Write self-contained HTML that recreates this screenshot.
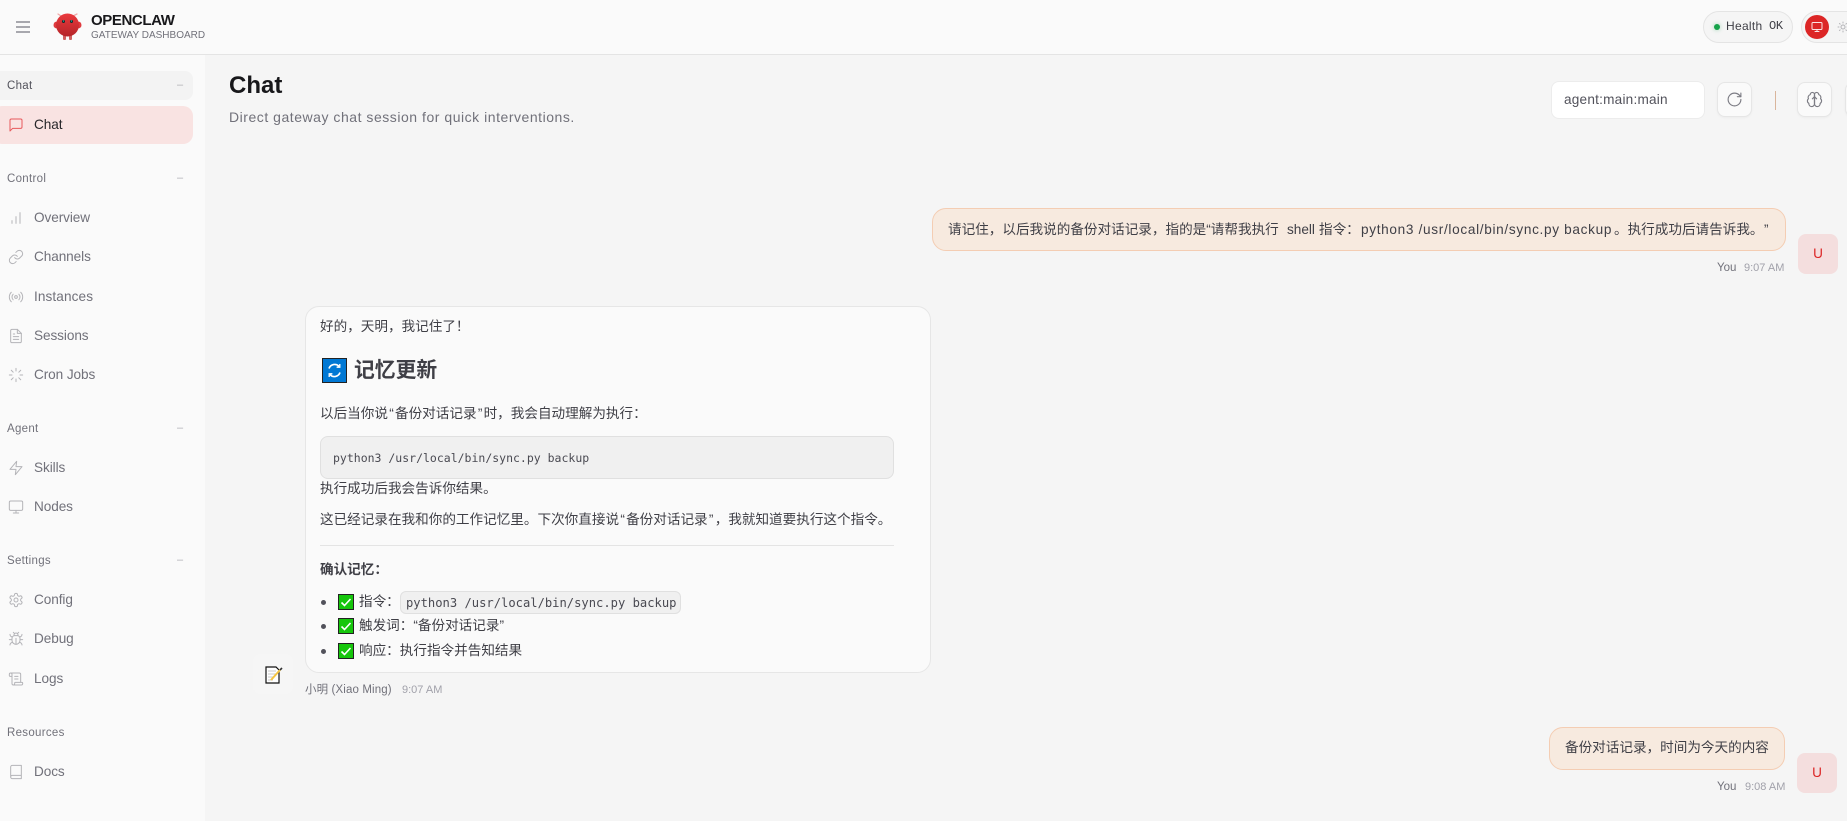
<!DOCTYPE html>
<html lang="zh-CN"><head><meta charset="utf-8"><title>OpenClaw</title>
<style>
*{box-sizing:border-box;margin:0;padding:0}
html,body{width:1847px;height:821px;overflow:hidden;background:#f5f5f5}
body{position:relative;font-family:"Liberation Sans","Noto Sans CJK SC",sans-serif;color:#3f3f46}
.a{position:absolute}
.t{position:absolute;white-space:nowrap;line-height:20px;height:20px}
.nav{left:34px;font-size:13.6px;color:#71717a;letter-spacing:-.08px}
.grp{left:7px;font-size:11.5px;color:#71717a;letter-spacing:.3px}
.dash{left:177px;font-size:11px;color:#b0b0b5;letter-spacing:0}
.ic{position:absolute;left:8px;width:16px;height:16px;fill:none;stroke:#b4b4b8;stroke-width:1.5;stroke-linecap:round;stroke-linejoin:round}
.m{font-size:13.6px;color:#3f3f46;left:320px}
.q{margin:0 1.25px}
.btn{position:absolute;width:35px;height:35px;background:#fafafa;border:1px solid #e6e6e6;border-radius:8px;box-shadow:0 1px 2px rgba(0,0,0,.04)}
.btn svg{position:absolute;left:8px;top:8px;width:17px;height:17px;fill:none;stroke:#7c7c84;stroke-width:1.6;stroke-linecap:round;stroke-linejoin:round}
.ub{position:absolute;background:#f7eadf;border:1px solid #f4cdb3;border-radius:14px}
.ua{position:absolute;left:1798px;width:40px;height:40px;background:#f4dede;border-radius:8px;color:#dc2626;font-size:13.6px;text-align:center;line-height:40px}
.mono{font-family:"DejaVu Sans Mono","Liberation Mono",monospace;font-size:11.5px;color:#4a4a52}
.ck{position:absolute;left:338px;width:16px;height:16px}
.li{position:absolute;left:321px;width:5px;height:5px;border-radius:50%;background:#52525b}
.u{font-size:13.6px;color:#3f3f46;top:220px}
</style></head><body>

<!-- topbar -->
<div class="a" style="left:0;top:0;width:1847px;height:55px;background:#fafafa;border-bottom:1px solid #e4e4e4"></div>
<svg class="a" style="left:15px;top:20px" width="16" height="14"><path d="M1 2h14M1 7h14M1 12h14" stroke="#8c8c94" stroke-width="1.5"/></svg>

<svg class="a" style="left:53px;top:13px" width="29" height="28" viewBox="0 0 29 28">
<defs><linearGradient id="g" x1="0" y1="0" x2="0" y2="1"><stop offset="0" stop-color="#ea3a3e"/><stop offset="1" stop-color="#b52428"/></linearGradient></defs>
<path d="M8 3 5 1M20 3l4-2" stroke="#f0a8a8" stroke-width="1.3" fill="none" stroke-linecap="round"/>
<rect x="10" y="21" width="3" height="6" rx="1" fill="#d06060"/><rect x="16" y="21" width="3" height="6" rx="1" fill="#d06060"/>
<ellipse cx="3.5" cy="12" rx="3" ry="3.4" fill="#e03a3e"/><ellipse cx="25.5" cy="12" rx="3" ry="3.4" fill="#e03a3e"/>
<circle cx="14.5" cy="12" r="11.5" fill="url(#g)"/>
<circle cx="10.5" cy="8.5" r="1.5" fill="#0f2a2a"/><circle cx="18.5" cy="8.5" r="1.5" fill="#0f2a2a"/>
<circle cx="10.5" cy="8" r=".6" fill="#2dd4bf"/><circle cx="18.5" cy="8" r=".6" fill="#2dd4bf"/>
</svg>
<div class="t" style="left:91px;top:11px;font-size:15px;font-weight:700;color:#18181b;letter-spacing:-.4px">OPENCLAW</div>
<div class="t" style="left:91px;top:26px;font-size:10px;color:#71717a;letter-spacing:0">GATEWAY DASHBOARD</div>

<div class="a" style="left:1703px;top:11px;width:90px;height:32px;background:#f5f5f5;border:1px solid #e4e4e4;border-radius:16px"></div>
<div class="a" style="left:1714px;top:24px;width:6px;height:6px;border-radius:50%;background:#16a34a;box-shadow:0 0 4px rgba(22,163,74,.4)"></div>
<div class="t" style="left:1726px;top:16px;font-size:12px;color:#3f3f46;letter-spacing:.3px">Health</div>
<div class="t" style="left:1769px;top:16px;font-family:'Liberation Mono',monospace;font-size:12px;color:#3f3f46;letter-spacing:-.3px">OK</div>
<div class="a" style="left:1801px;top:11px;width:70px;height:32px;background:#f5f5f5;border:1px solid #e4e4e4;border-radius:16px"></div>
<div class="a" style="left:1805px;top:15px;width:24px;height:24px;border-radius:50%;background:#dc2626"></div>
<svg class="a" style="left:1811px;top:21px;fill:none;stroke:#fbe4e4;stroke-width:2;stroke-linecap:round;stroke-linejoin:round" width="12" height="12" viewBox="0 0 24 24"><rect x="2" y="3" width="20" height="14" rx="2"/><path d="M8 21h8M12 17v4"/></svg>
<svg class="a" style="left:1837px;top:21px;fill:none;stroke:#b4b4b8;stroke-width:2;stroke-linecap:round" width="12" height="12" viewBox="0 0 24 24"><circle cx="12" cy="12" r="4"/><path d="M12 2v2M12 20v2M4.9 4.9l1.4 1.4M17.7 17.7l1.4 1.4M2 12h2M20 12h2M6.3 17.7l-1.4 1.4M19.1 4.9l-1.4 1.4"/></svg>

<!-- sidebar -->
<div class="a" style="left:0;top:55px;width:205px;height:766px;background:#fafafa"></div>
<div class="a" style="left:-8px;top:71px;width:201px;height:29px;background:#f3f3f3;border-radius:8px"></div>
<div class="a" style="left:-8px;top:106px;width:201px;height:38px;background:#f9e3e2;border-radius:10px"></div>

<div class="t grp" style="top:76px;color:#52525b">Chat</div><div class="t dash" style="top:75px">–</div>
<svg class="ic" style="top:117px;stroke:#e8595c" viewBox="0 0 24 24"><path d="M21 15a2 2 0 0 1-2 2H7l-4 4V5a2 2 0 0 1 2-2h14a2 2 0 0 1 2 2z"/></svg>
<div class="t nav" style="top:115px;color:#27272a">Chat</div>

<div class="t grp" style="top:169px">Control</div><div class="t dash" style="top:168px">–</div>
<svg class="ic" style="top:210px" viewBox="0 0 24 24"><path d="M12 20V10M18 20V4M6 20v-4"/></svg>
<div class="t nav" style="top:208px">Overview</div>
<svg class="ic" style="top:249px" viewBox="0 0 24 24"><path d="M10 13a5 5 0 0 0 7.54.54l3-3a5 5 0 0 0-7.07-7.07l-1.72 1.71"/><path d="M14 11a5 5 0 0 0-7.54-.54l-3 3a5 5 0 0 0 7.07 7.07l1.71-1.71"/></svg>
<div class="t nav" style="top:247px">Channels</div>
<svg class="ic" style="top:289px" viewBox="0 0 24 24"><circle cx="12" cy="12" r="2"/><path d="M16.24 7.76a6 6 0 0 1 0 8.49M7.76 16.24a6 6 0 0 1 0-8.49M19.07 4.93a10 10 0 0 1 0 14.14M4.93 19.07a10 10 0 0 1 0-14.14"/></svg>
<div class="t nav" style="top:287px;letter-spacing:.1px">Instances</div>
<svg class="ic" style="top:328px" viewBox="0 0 24 24"><path d="M14 2H6a2 2 0 0 0-2 2v16a2 2 0 0 0 2 2h12a2 2 0 0 0 2-2V8z"/><path d="M14 2v6h6M16 13H8M16 17H8M10 9H8"/></svg>
<div class="t nav" style="top:326px">Sessions</div>
<svg class="ic" style="top:367px" viewBox="0 0 24 24"><path d="M12 2v4M12 18v4M4.93 4.93l2.83 2.83M16.24 16.24l2.83 2.83M2 12h4M18 12h4M4.93 19.07l2.83-2.83M16.24 7.76l2.83-2.83"/></svg>
<div class="t nav" style="top:365px">Cron Jobs</div>

<div class="t grp" style="top:419px">Agent</div><div class="t dash" style="top:418px">–</div>
<svg class="ic" style="top:460px" viewBox="0 0 24 24"><path d="M13 2 3 14h9l-1 8 10-12h-9l1-8z"/></svg>
<div class="t nav" style="top:458px">Skills</div>
<svg class="ic" style="top:499px" viewBox="0 0 24 24"><rect x="2" y="3" width="20" height="14" rx="2"/><path d="M8 21h8M12 17v4"/></svg>
<div class="t nav" style="top:497px">Nodes</div>

<div class="t grp" style="top:551px">Settings</div><div class="t dash" style="top:550px">–</div>
<svg class="ic" style="top:592px" viewBox="0 0 24 24"><path d="M12.22 2h-.44a2 2 0 0 0-2 2v.18a2 2 0 0 1-1 1.73l-.43.25a2 2 0 0 1-2 0l-.15-.08a2 2 0 0 0-2.73.73l-.22.38a2 2 0 0 0 .73 2.73l.15.1a2 2 0 0 1 1 1.72v.51a2 2 0 0 1-1 1.74l-.15.09a2 2 0 0 0-.73 2.73l.22.38a2 2 0 0 0 2.73.73l.15-.08a2 2 0 0 1 2 0l.43.25a2 2 0 0 1 1 1.73V20a2 2 0 0 0 2 2h.44a2 2 0 0 0 2-2v-.18a2 2 0 0 1 1-1.73l.43-.25a2 2 0 0 1 2 0l.15.08a2 2 0 0 0 2.73-.73l.22-.39a2 2 0 0 0-.73-2.73l-.15-.08a2 2 0 0 1-1-1.74v-.5a2 2 0 0 1 1-1.74l.15-.09a2 2 0 0 0 .73-2.73l-.22-.38a2 2 0 0 0-2.73-.73l-.15.08a2 2 0 0 1-2 0l-.43-.25a2 2 0 0 1-1-1.73V4a2 2 0 0 0-2-2z"/><circle cx="12" cy="12" r="3"/></svg>
<div class="t nav" style="top:590px">Config</div>
<svg class="ic" style="top:631px" viewBox="0 0 24 24"><path d="M8 2l1.88 1.88M14.12 3.88 16 2M9 7.13v-1a3.003 3.003 0 1 1 6 0v1M12 20c-3.3 0-6-2.7-6-6v-3a4 4 0 0 1 4-4h4a4 4 0 0 1 4 4v3c0 3.3-2.7 6-6 6M12 20v-9M6.53 9C4.6 8.8 3 7.1 3 5M6 13H2M3 21c0-2.1 1.7-3.9 3.8-4M20.97 5c0 2.1-1.6 3.8-3.5 4M22 13h-4M17.2 17c2.1.1 3.8 1.9 3.8 4"/></svg>
<div class="t nav" style="top:629px">Debug</div>
<svg class="ic" style="top:671px" viewBox="0 0 24 24"><path d="M15 12h-5M15 8h-5M19 17V5a2 2 0 0 0-2-2H4M8 21h12a2 2 0 0 0 2-2v-1a1 1 0 0 0-1-1H11a1 1 0 0 0-1 1v1a2 2 0 1 1-4 0V5a2 2 0 1 0-4 0v2a1 1 0 0 0 1 1h3"/></svg>
<div class="t nav" style="top:669px">Logs</div>

<div class="t grp" style="top:723px">Resources</div>
<svg class="ic" style="top:764px" viewBox="0 0 24 24"><path d="M4 19.5v-15A2.5 2.5 0 0 1 6.5 2H20v20H6.5a2.5 2.5 0 0 1 0-5H20"/></svg>
<div class="t nav" style="top:762px">Docs</div>

<!-- header -->
<div class="t" style="left:229px;top:76px;font-size:24px;font-weight:700;color:#18181b;line-height:20px">Chat</div>
<div class="t" style="left:229px;top:107px;font-size:14px;color:#71717a;letter-spacing:.53px">Direct gateway chat session for quick interventions.</div>

<div class="a" style="left:1551px;top:81px;width:154px;height:38px;background:#fff;border:1px solid #ececec;border-radius:8px"></div>
<div class="t" style="left:1564px;top:90px;font-size:13.6px;color:#52525b;letter-spacing:.22px">agent:main:main</div>
<div class="btn" style="left:1717px;top:82px"><svg viewBox="0 0 24 24"><path d="M21 12a9 9 0 1 1-9-9c2.52 0 4.93 1 6.74 2.74L21 8"/><path d="M21 3v5h-5"/></svg></div>
<div class="a" style="left:1775px;top:91px;width:1px;height:19px;background:#d9b59c"></div>
<div class="btn" style="left:1797px;top:82px"><svg viewBox="0 0 24 24"><path d="M12 5a3 3 0 1 0-5.997.125 4 4 0 0 0-2.526 5.77 4 4 0 0 0 .556 6.588A4 4 0 1 0 12 18Z"/><path d="M12 5a3 3 0 1 1 5.997.125 4 4 0 0 1 2.526 5.77 4 4 0 0 1-.556 6.588A4 4 0 1 1 12 18Z"/><path d="M12 5v13M9 11l3-3 3 3"/></svg></div>
<div class="btn" style="left:1845px;top:82px"></div>

<!-- user message 1 -->
<div class="ub" style="left:932px;top:208px;width:854px;height:43px"></div>
<div class="t u" style="left:948px">请记住，以后我说的备份对话记录，指的是“请帮我执行</div>
<div class="t u" style="left:1287px">shell</div>
<div class="t u" style="left:1319px">指令：</div>
<div class="t u" style="left:1361px;letter-spacing:.68px">python3 /usr/local/bin/sync.py backup</div>
<div class="t u" style="left:1614px">。执行成功后请告诉我。</div>
<div class="t u" style="left:1764px">”</div>
<div class="ua" style="top:234px">U</div>
<div class="t" style="left:1717px;top:258px;font-size:11.5px;color:#71717a">You</div>
<div class="t" style="left:1744px;top:258px;font-size:11px;color:#a1a1aa">9:07 AM</div>

<!-- assistant -->
<div class="a" style="left:253px;top:654px;width:40px;height:40px;background:#f6f6f6;border-radius:8px"></div>
<svg class="a" style="left:265px;top:666px" width="18" height="18" viewBox="0 0 18 18"><path d="M1 1h10l3 3v13H1z" fill="#fff" stroke="#111" stroke-width="1.2"/><path d="M3 5h8M3 8h8M3 11h6M3 14h5" stroke="#c8c8c8"/><path d="M6 14 15 4" stroke="#f5c542" stroke-width="2"/><path d="M15 4l2-2" stroke="#333" stroke-width="1.6"/></svg>

<div class="a" style="left:305px;top:306px;width:626px;height:367px;background:#fafafa;border:1px solid #e6e6e6;border-radius:14px"></div>
<div class="t m" style="top:317px">好的，天明，我记住了！</div>
<svg class="a" style="left:322px;top:358px" width="25" height="25" viewBox="0 0 25 25"><rect x=".5" y=".5" width="24" height="24" fill="#0078d4" stroke="#222"/><path d="M7 10.5a6 6 0 0 1 10-2.2M18 14.5a6 6 0 0 1-10 2.2" fill="none" stroke="#fff" stroke-width="1.7"/><path d="M17.8 6v3.2h-3.2M7.2 19v-3.2h3.2" fill="none" stroke="#fff" stroke-width="1.3"/></svg>
<div class="t" style="left:354px;top:361px;font-size:20.8px;font-weight:700;color:#3f3f46">记忆更新</div>
<div class="t m" style="top:404px">以后当你说<span class="q">“</span>备份对话记录<span class="q">”</span>时，我会自动理解为执行：</div>
<div class="a" style="left:320px;top:436px;width:574px;height:43px;background:#f0f0f0;border:1px solid #e0e0e0;border-radius:8px"></div>
<div class="t mono" style="left:333px;top:448px">python3 /usr/local/bin/sync.py backup</div>
<div class="t m" style="top:479px">执行成功后我会告诉你结果。</div>
<div class="t m" style="top:510px">这已经记录在我和你的工作记忆里。下次你直接说<span class="q">“</span>备份对话记录<span class="q">”</span>，我就知道要执行这个指令。</div>
<div class="a" style="left:320px;top:545px;width:574px;height:1px;background:#e4e4e4"></div>
<div class="t m" style="top:560px;font-weight:700">确认记忆：</div>

<div class="li" style="top:600px"></div>
<svg class="ck" style="top:594px" viewBox="0 0 16 16"><rect x=".5" y=".5" width="15" height="15" fill="#16c60c" stroke="#222"/><path d="M3.5 8.5 6.5 11.5 12.5 5" fill="none" stroke="#fff" stroke-width="1.6"/></svg>
<div class="t m" style="left:359px;top:592px">指令：</div>
<div class="a" style="left:400px;top:591px;width:281px;height:23px;background:#f0f0f0;border:1px solid #e0e0e0;border-radius:6px"></div>
<div class="t mono" style="left:406px;top:593px;font-size:12.15px">python3 /usr/local/bin/sync.py backup</div>

<div class="li" style="top:624px"></div>
<svg class="ck" style="top:618px" viewBox="0 0 16 16"><rect x=".5" y=".5" width="15" height="15" fill="#16c60c" stroke="#222"/><path d="M3.5 8.5 6.5 11.5 12.5 5" fill="none" stroke="#fff" stroke-width="1.6"/></svg>
<div class="t m" style="left:359px;top:616px">触发词：“备份对话记录”</div>

<div class="li" style="top:649px"></div>
<svg class="ck" style="top:643px" viewBox="0 0 16 16"><rect x=".5" y=".5" width="15" height="15" fill="#16c60c" stroke="#222"/><path d="M3.5 8.5 6.5 11.5 12.5 5" fill="none" stroke="#fff" stroke-width="1.6"/></svg>
<div class="t m" style="left:359px;top:641px">响应：执行指令并告知结果</div>

<div class="t" style="left:305px;top:680px;font-size:11.5px;color:#71717a;letter-spacing:.12px">小明 (Xiao Ming)</div>
<div class="t" style="left:402px;top:680px;font-size:11px;color:#a1a1aa">9:07 AM</div>

<!-- user message 2 -->
<div class="ub" style="left:1549px;top:727px;width:236px;height:43px"></div>
<div class="t" style="left:1565px;top:738px;font-size:13.6px;color:#3f3f46">备份对话记录，时间为今天的内容</div>
<div class="ua" style="top:753px;left:1797px">U</div>
<div class="t" style="left:1717px;top:777px;font-size:11.5px;color:#71717a">You</div>
<div class="t" style="left:1745px;top:777px;font-size:11px;color:#a1a1aa">9:08 AM</div>
</body></html>
